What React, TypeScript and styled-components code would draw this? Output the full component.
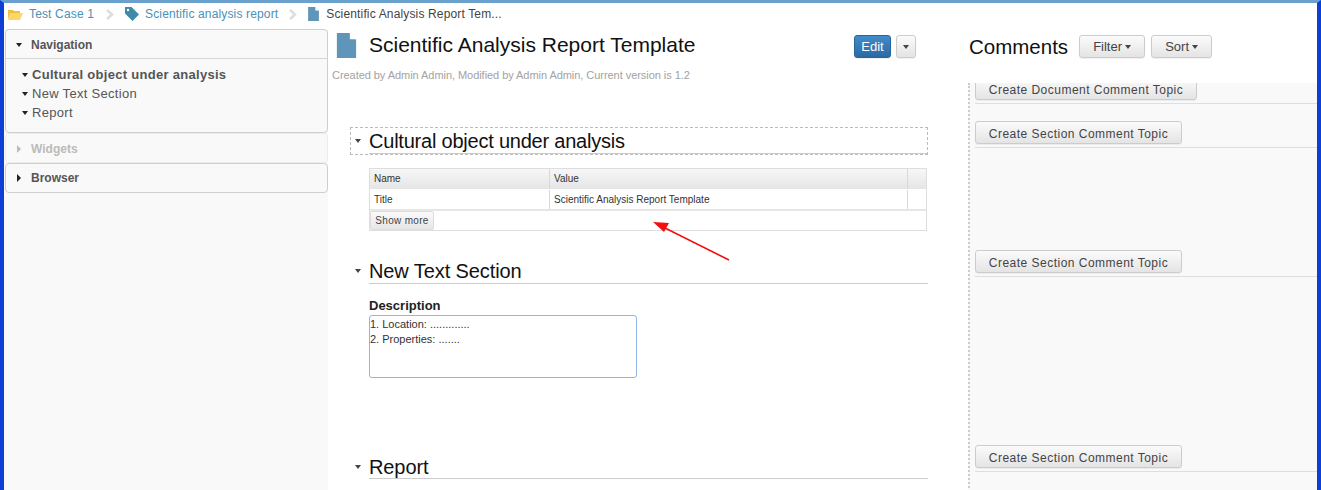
import React from "react";
import styled, { createGlobalStyle } from "styled-components";

const Global = createGlobalStyle`
    html, body {
        margin: 0;
        padding: 0;
        background: #fff;
    }
    * {
        box-sizing: border-box;
    }
`

const Frame = styled.div`
    position: relative;
    width: 1321px;
    height: 490px;
    overflow: hidden;
    display: flex;
    flex-direction: column;
    background: #fff;
    font-family: "Liberation Sans", Arial, sans-serif;
    border-left: 4px solid #0b3fd6;
    border-right: 4px solid #0b3fd6;
    border-top: 3px solid #6aa0cc;
`
const Crumbs = styled.nav`
    height: 26px;
    flex-shrink: 0;
    display: flex;
    align-items: center;
    padding: 0 0 4px 4px;
    font-size: 12px;
    letter-spacing: 0.15px;
    >a {
        color: #4a90b8;
        text-decoration: none;
    }
    >span {
        color: #444;
    }
`
const CrumbIcon = styled.svg<{ $gap: number }>`
    flex-shrink: 0;
    margin-right: ${p => p.$gap}px;
`
const CrumbSep = styled.svg<{ $l: number; $r: number }>`
    flex-shrink: 0;
    margin: 0 ${p => p.$r}px 0 ${p => p.$l}px;
`
const Columns = styled.div`
    flex: 1;
    display: flex;
    min-height: 0;
`
const Sidebar = styled.aside`
    width: 324px;
    flex-shrink: 0;
    padding-left: 1px;
    background: #f9f9f9;
`
const Panel = styled.section<{ $off?: boolean }>`
    border: 1px solid ${p => (p.$off ? "#ececec" : "#cfcfcf")};
    border-radius: 4px;
    color: ${p => (p.$off ? "#bbb" : "#555")};
`
const PanelHead = styled.div<{ $open?: boolean; $off?: boolean }>`
    height: ${p => (p.$open ? 29 : 28)}px;
    display: flex;
    align-items: center;
    padding: ${p => (p.$off ? 2 : p.$open ? 1 : 0)}px 0 0 10px;
    gap: 9px;
    font-size: 12px;
    font-weight: bold;
    border-bottom: ${p => (p.$open ? "1px solid #d6d6d6" : "none")};
`
const CaretDown = styled.i<{ $c?: string }>`
    width: 0;
    height: 0;
    flex-shrink: 0;
    border-left: 3.5px solid transparent;
    border-right: 3.5px solid transparent;
    border-top: 4px solid ${p => p.$c ?? "#222"};
`
const CaretRight = styled.i<{ $c?: string }>`
    width: 0;
    height: 0;
    flex-shrink: 0;
    margin-left: 1px;
    margin-right: 1px;
    border-top: 4px solid transparent;
    border-bottom: 4px solid transparent;
    border-left: 4px solid ${p => p.$c ?? "#222"};
`
const Tree = styled.ul`
    list-style: none;
    margin: 0;
    padding: 6px 0 0 16px;
    height: 73px;
    >li {
        height: 19px;
        display: flex;
        align-items: center;
        gap: 4px;
        font-size: 13px;
        font-weight: normal;
        letter-spacing: 0.3px;
        color: #555;
        &.current {
            font-weight: bold;
            letter-spacing: 0.29px;
        }
    }
`
const Main = styled.main`
    width: 640px;
    flex-shrink: 0;
    padding: 0 40px 0 4px;
`
const TitleRow = styled.header`
    height: 32px;
    display: flex;
    align-items: center;
    padding-left: 4px;
    >h1 {
        margin: 0 0 0 12px;
        font-size: 21px;
        font-weight: normal;
        color: #111;
    }
`
const TitleActions = styled.div`
    margin: 3px 12px 0 auto;
    display: flex;
    gap: 5px;
`
const Btn = styled.button`
    height: 23px;
    padding: 0;
    display: inline-flex;
    align-items: center;
    justify-content: center;
    gap: 3px;
    font-family: inherit;
    font-size: 13px;
    color: #444;
    border: 1px solid #ccc;
    border-radius: 3px;
    background: linear-gradient(#fbfbfb, #e4e4e4);
    box-shadow: 0 1px 1px rgba(0, 0, 0, 0.06);
`
const EditBtn = styled(Btn)`
    width: 37px;
    color: #fff;
    border-color: #2a6496;
    background: linear-gradient(#428bca, #2a6aa4);
`
const CaretBtn = styled(Btn)`
    width: 20px;
`
const Meta = styled.p`
    margin: 8px 0 0;
    height: 13px;
    line-height: 13px;
    font-size: 11px;
    letter-spacing: -0.05px;
    color: #a2a2a2;
`
const Section = styled.section<{ $top: number; $dashed?: boolean }>`
    margin: ${p => p.$top}px 0 0 ${p => (p.$dashed ? 18 : 19)}px;
    ${p => (p.$dashed ? "border: 1px dashed #bbb; height: 28px; padding-left: 1px;" : "")}
`
const Heading = styled.div<{ $dashed?: boolean; $h?: number }>`
    height: ${p => p.$h ?? 26}px;
    display: flex;
    align-items: center;
    gap: 8px;
    padding-left: ${p => (p.$dashed ? 3 : 4)}px;
    >h2 {
        flex: 1;
        margin: 0;
        height: 100%;
        line-height: 26px;
        font-size: 20px;
        font-weight: normal;
        letter-spacing: ${p => (p.$dashed ? -0.22 : -0.1)}px;
        color: #111;
        border-bottom: 1px solid #ccc;
    }
`
const Grid = styled.div`
    margin: 13px 0 0 18px;
    width: 558px;
    height: 63px;
    border: 1px solid #dedede;
    font-size: 10px;
    color: #333;
`
const GridRow = styled.div<{ $head?: boolean }>`
    display: grid;
    grid-template-columns: 180px 358px 1fr;
    height: 21px;
    background: ${p => (p.$head ? "linear-gradient(#f7f7f7, #e5e5e5)" : "#fff")};
    border-bottom: ${p => (p.$head ? "1px solid #fff" : "2px solid #e6e6e6")};
    >div {
        padding-left: 4px;
        line-height: 19px;
        border-right: 1px solid #d8d8d8;
    }
    >div:last-child {
        border-right: none;
    }
`
const ShowMore = styled.button`
    display: block;
    width: 64px;
    height: 19px;
    margin: 0;
    padding: 0;
    font-family: inherit;
    font-size: 10px;
    letter-spacing: 0.3px;
    color: #444;
    border: 1px solid #ddd;
    border-radius: 2px;
    background: linear-gradient(#fafafa, #e6e6e6);
`
const Field = styled.div`
    margin: 14px 0 0 18px;
    >label {
        display: block;
        height: 17px;
        line-height: 16px;
        font-size: 13px;
        font-weight: bold;
        color: #222;
    }
    >div {
        width: 268px;
        height: 63px;
        padding: 1px 0 0;
        font-size: 11px;
        line-height: 15px;
        color: #333;
        border: 1px solid #8fb4e6;
        border-radius: 3px;
    }
`
const Comments = styled.aside`
    flex: 1;
    min-width: 0;
`
const CommentsHead = styled.header`
    height: 54px;
    display: flex;
    align-items: flex-start;
    padding: 6px 0 0 1px;
    >h2 {
        margin: 0 11px 0 0;
        height: 23px;
        line-height: 24px;
        font-size: 20.5px;
        font-weight: normal;
        color: #111;
    }
`
const HeadBtn = styled(Btn) <{ $w: number }>`
    width: ${p => p.$w}px;
    margin-right: 6px;
    font-size: 13px;
`
const TopicList = styled.div`
    height: 100%;
    background: #f9f9f9;
    border-left: 2px dotted #ccc;
    padding-left: 5px;
`
const TopicRow = styled.div<{ $h: number }>`
    height: ${p => p.$h}px;
    overflow: hidden;
    display: flex;
    flex-direction: column;
    justify-content: flex-end;
    align-items: flex-start;
    padding-bottom: 3px;
    border-bottom: 1px solid #dedede;
`
const TopicBtn = styled(Btn) <{ $w: number }>`
    width: ${p => p.$w}px;
    flex-shrink: 0;
    padding-top: 2px;
    font-size: 12px;
    letter-spacing: 0.48px;
`
const Arrow = styled.svg`
    position: absolute;
    left: 640px;
    top: 210px;
`

const FileIcon = ({ w, h }: { w: number; h: number }) => (
    <svg width={w} height={h} viewBox="0 0 20 26">
        <path d="M0 0h13l7 7v19H0z" fill="#5f95b8" />
        <path d="M13.5 0l6.5 6.5h-6.5z" fill="#fff" />
    </svg>
)

const SmallCaret = () => <CaretDown $c="#444" />

function App() {
    return (
        <Frame>
            <Global />
            <Crumbs>
                <CrumbIcon $gap={6} width="15" height="12" viewBox="0 0 15 12">
                    <path d="M0 2h5l1 1h6v2H3L0 11z" fill="#f0c040" />
                    <path d="M3 5h12l-3 7H0z" fill="#fdd663" />
                </CrumbIcon>
                <a href="#">Test Case 1</a>
                <CrumbSep $l={12} $r={11} width="8" height="11" viewBox="0 0 8 11">
                    <path d="M1 1l5 4.5L1 10" fill="none" stroke="#ddd" strokeWidth="2.5" />
                </CrumbSep>
                <CrumbIcon $gap={6} width="14" height="14" viewBox="0 0 14 14">
                    <path d="M0 0h6.5L14 7.5 7.5 14 0 6.5z" fill="#3f8aa6" />
                    <circle cx="3" cy="3" r="1.2" fill="#fff" />
                </CrumbIcon>
                <a href="#">Scientific analysis report</a>
                <CrumbSep $l={11} $r={11} width="8" height="11" viewBox="0 0 8 11">
                    <path d="M1 1l5 4.5L1 10" fill="none" stroke="#ddd" strokeWidth="2.5" />
                </CrumbSep>
                <CrumbIcon $gap={7} width="11" height="14" viewBox="0 0 20 26">
                    <path d="M0 0h13l7 7v19H0z" fill="#5f95b8" />
                    <path d="M13.5 0l6.5 6.5h-6.5z" fill="#fff" />
                </CrumbIcon>
                <span>Scientific Analysis Report Tem...</span>
            </Crumbs>
            <Columns>
                <Sidebar>
                    <Panel>
                        <PanelHead $open>
                            <CaretDown />
                            Navigation
                        </PanelHead>
                        <Tree>
                            <li className="current"><CaretDown />Cultural object under analysis</li>
                            <li><CaretDown />New Text Section</li>
                            <li><CaretDown />Report</li>
                        </Tree>
                    </Panel>
                    <Panel $off>
                        <PanelHead $off>
                            <CaretRight $c="#bbb" />
                            Widgets
                        </PanelHead>
                    </Panel>
                    <Panel>
                        <PanelHead>
                            <CaretRight />
                            Browser
                        </PanelHead>
                    </Panel>
                </Sidebar>
                <Main>
                    <TitleRow>
                        <FileIcon w={21} h={25} />
                        <h1>Scientific Analysis Report Template</h1>
                        <TitleActions>
                            <EditBtn>Edit</EditBtn>
                            <CaretBtn><SmallCaret /></CaretBtn>
                        </TitleActions>
                    </TitleRow>
                    <Meta>Created by Admin Admin, Modified by Admin Admin, Current version is 1.2</Meta>
                    <Section $top={45} $dashed>
                        <Heading $dashed>
                            <SmallCaret />
                            <h2>Cultural object under analysis</h2>
                        </Heading>
                    </Section>
                    <Section $top={0}>
                        <Grid>
                            <GridRow $head>
                                <div>Name</div>
                                <div>Value</div>
                                <div></div>
                            </GridRow>
                            <GridRow>
                                <div>Title</div>
                                <div>Scientific Analysis Report Template</div>
                                <div></div>
                            </GridRow>
                            <ShowMore>Show more</ShowMore>
                        </Grid>
                    </Section>
                    <Section $top={27}>
                        <Heading>
                            <SmallCaret />
                            <h2>New Text Section</h2>
                        </Heading>
                        <Field>
                            <label>Description</label>
                            <div>
                                1. Location: .............<br />
                                2. Properties: .......
                            </div>
                        </Field>
                    </Section>
                    <Section $top={76}>
                        <Heading $h={25}>
                            <SmallCaret />
                            <h2>Report</h2>
                        </Heading>
                    </Section>
                </Main>
                <Comments>
                    <CommentsHead>
                        <h2>Comments</h2>
                        <HeadBtn $w={66}>Filter <SmallCaret /></HeadBtn>
                        <HeadBtn $w={61}>Sort <SmallCaret /></HeadBtn>
                    </CommentsHead>
                    <TopicList>
                        <TopicRow $h={21}><TopicBtn $w={222}>Create Document Comment Topic</TopicBtn></TopicRow>
                        <TopicRow $h={44}><TopicBtn $w={207}>Create Section Comment Topic</TopicBtn></TopicRow>
                        <TopicRow $h={129}><TopicBtn $w={207}>Create Section Comment Topic</TopicBtn></TopicRow>
                        <TopicRow $h={195}><TopicBtn $w={207}>Create Section Comment Topic</TopicBtn></TopicRow>
                    </TopicList>
                </Comments>
            </Columns>
            <Arrow width="90" height="60" viewBox="0 0 90 60">
                <path d="M85 47L17 13" stroke="#f01010" strokeWidth="1.6" fill="none" />
                <path d="M9 9l16 1-5 9z" fill="#f01010" />
            </Arrow>
        </Frame>
    )
}

export default App
